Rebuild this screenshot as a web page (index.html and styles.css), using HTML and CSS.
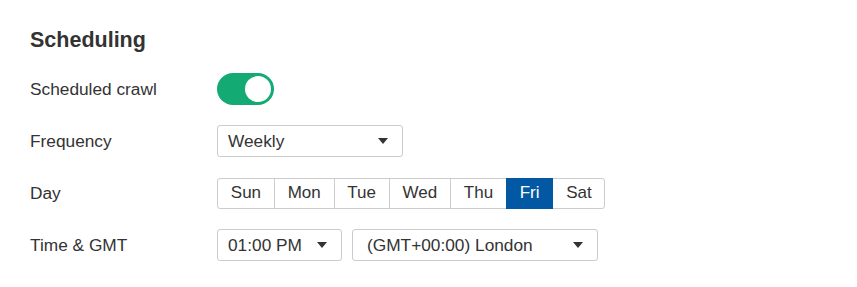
FILE: index.html
```html
<!DOCTYPE html>
<html lang="en">

<head>
    <meta charset="UTF-8">
    <meta name="viewport" content="width=device-width, initial-scale=1.0">
    <title>Scheduling</title>
    <link rel="stylesheet" href="styles.css">
</head>

<body>
    <div class="section">
        <h2 class="section-title">Scheduling</h2>

        <div class="form-row">
            <span class="form-label">Scheduled crawl</span>
            <div class="toggle on">
                <div class="toggle-knob"></div>
            </div>
        </div>

        <div class="form-row">
            <span class="form-label">Frequency</span>
            <div class="select select-frequency">
                <span>Weekly</span>
                <svg class="caret" width="10" height="6" viewBox="0 0 10 6"><path d="M0 0h10L5 6z" fill="#333"/></svg>
            </div>
        </div>

        <div class="form-row">
            <span class="form-label">Day</span>
            <div class="day-group">
                <button class="day-btn">Sun</button>
                <button class="day-btn">Mon</button>
                <button class="day-btn">Tue</button>
                <button class="day-btn">Wed</button>
                <button class="day-btn">Thu</button>
                <button class="day-btn active">Fri</button>
                <button class="day-btn">Sat</button>
            </div>
        </div>

        <div class="form-row">
            <span class="form-label">Time &amp; GMT</span>
            <div class="select-group">
                <div class="select select-time">
                    <span>01:00 PM</span>
                    <svg class="caret" width="10" height="6" viewBox="0 0 10 6"><path d="M0 0h10L5 6z" fill="#333"/></svg>
                </div>
                <div class="select select-zone">
                    <span>(GMT+00:00) London</span>
                    <svg class="caret" width="10" height="6" viewBox="0 0 10 6"><path d="M0 0h10L5 6z" fill="#333"/></svg>
                </div>
            </div>
        </div>
    </div>
</body>

</html>
```

FILE: styles.css
```css
* {
    margin: 0;
    padding: 0;
    box-sizing: border-box;
    font-family: "Liberation Sans", Arial, sans-serif;
}

body {
    background-color: #fff;
    color: #333;
    padding: 27px 30px 0;
}

.section-title {
    font-size: 21.5px;
    font-weight: bold;
    color: #333;
    line-height: 26px;
    margin-bottom: 20px;
}

.form-row {
    display: flex;
    align-items: center;
    height: 32px;
    margin-bottom: 20px;
}

.form-row:nth-child(3) {
    margin-top: 1px;
}

.form-row:last-child {
    margin-bottom: 0;
}

.form-label {
    width: 187px;
    font-size: 17.3px;
}

.toggle {
    width: 57px;
    height: 32px;
    border-radius: 16px;
    background-color: #ccc;
    display: flex;
    align-items: center;
    padding: 0 3px;
}

.toggle.on {
    background-color: #13ab73;
    justify-content: flex-end;
}

.toggle-knob {
    width: 26px;
    height: 26px;
    border-radius: 50%;
    background-color: white;
}

.select {
    height: 32px;
    border: 1px solid #ccc;
    border-radius: 3px;
    display: flex;
    align-items: center;
    justify-content: space-between;
    padding: 0 14px 0 10px;
    font-size: 17.3px;
    background-color: white;
}

.select-frequency {
    width: 186px;
}

.select-group {
    display: flex;
    gap: 10px;
}

.select-time {
    width: 125px;
}

.select-zone {
    width: 246px;
    padding-left: 14px;
}

.caret {
    display: block;
}

.day-group {
    display: flex;
}

.day-btn {
    height: 31px;
    padding: 0 12.8px;
    border: 1px solid #ccc;
    margin-left: -1px;
    background-color: white;
    color: #333;
    font-size: 17px;
    cursor: pointer;
}

.day-btn:first-child {
    margin-left: 0;
    border-radius: 3px 0 0 3px;
}

.day-btn:last-child {
    border-radius: 0 3px 3px 0;
}

.day-btn.active {
    background-color: #0358a4;
    border-color: #0358a4;
    color: white;
    position: relative;
}
```
